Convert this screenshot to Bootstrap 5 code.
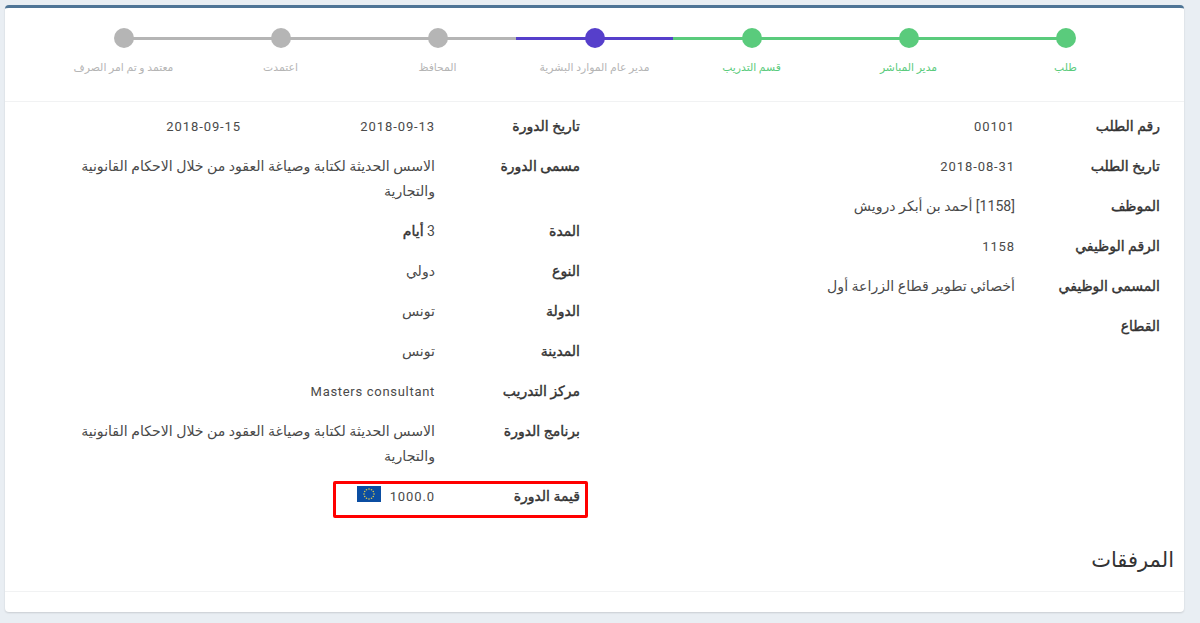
<!DOCTYPE html>
<html lang="ar" dir="rtl">
<head>
<meta charset="utf-8">
<title>طلب دورة</title>
<link rel="stylesheet" href="https://cdn.jsdelivr.net/npm/bootstrap@5.3.0/dist/css/bootstrap.min.css">
<style>
html,body{height:100%;overflow:hidden}
body{background:#e9eef3;font-family:Roboto,"DejaVu Sans",sans-serif;color:#444;font-size:13px;padding:5px 16px 11px 5px}
.sheet{height:607px;background:#fff;border:0;border-top:3px solid #4f7596;border-radius:4px;box-shadow:0 1px 2px rgba(0,0,0,.14)}
.stepper{padding:20px 40px 0;height:94px;border-bottom:1px solid #f1f2f3}
.step{flex:0 0 157px;text-align:center;font-size:10.8px;color:#b5b5b5}
.track{position:relative;height:20px}
.track::before{content:"";position:absolute;top:9px;height:3px;left:0;right:0;background:#b5b5b5}
.step:first-child .track::before{right:50%}
.step:last-child .track::before{left:50%}
.dot{position:absolute;top:0;left:50%;width:20px;height:20px;margin-left:-10px;border-radius:50%;background:#b5b5b5}
.done{color:#5acb7c}
.done .track::before,.done .dot{background:#5acb7c}
.now .track::before,.now .dot{background:#563fcb}
.step-name{margin-top:10px;line-height:20px;white-space:nowrap}
.info{padding-top:12px}
.cell-r{padding-inline-start:24px}
.cell-l{padding-inline-start:14.5px}
.line{display:flex;line-height:25px;margin-bottom:15px;position:relative}
.lab{flex:0 0 145px;font-weight:500;color:#333;font-size:14px;-webkit-text-stroke:.4px #333}
.val{flex:0 0 360px;letter-spacing:.9px;color:#4a4a4a}
.val-ar{letter-spacing:0;font-size:14.1px}
.val-lat{letter-spacing:.7px;text-align:right}
.two{flex:0 0 194px}
.strong-ar{color:#333;-webkit-text-stroke:.4px #333}
.eu{width:24px;height:16px;margin-inline-start:9px;vertical-align:-1px}
.redbox{position:absolute;top:-3px;height:37px;right:-8px;width:255px;border:3px solid #f00;border-radius:2px}
.head-att{font-size:21px;font-weight:400;color:#333;margin:0;padding:22px 10px 17px;border-bottom:1px solid #f1f2f3;line-height:28px}
</style>
</head>
<body>
<div class="card sheet">
  <div class="stepper d-flex">
    <div class="step done"><div class="track"><span class="dot"></span></div><div class="step-name">طلب</div></div>
    <div class="step done"><div class="track"><span class="dot"></span></div><div class="step-name">مدير المباشر</div></div>
    <div class="step done"><div class="track"><span class="dot"></span></div><div class="step-name">قسم التدريب</div></div>
    <div class="step now"><div class="track"><span class="dot"></span></div><div class="step-name">مدير عام الموارد البشرية</div></div>
    <div class="step"><div class="track"><span class="dot"></span></div><div class="step-name">المحافظ</div></div>
    <div class="step"><div class="track"><span class="dot"></span></div><div class="step-name">اعتمدت</div></div>
    <div class="step"><div class="track"><span class="dot"></span></div><div class="step-name">معتمد و تم امر الصرف</div></div>
  </div>
  <div class="row g-0 info">
    <div class="col-6 cell-r">
      <div class="line"><div class="lab">رقم الطلب</div><div class="val">00101</div></div>
      <div class="line"><div class="lab">تاريخ الطلب</div><div class="val">2018-08-31</div></div>
      <div class="line"><div class="lab">الموظف</div><div class="val val-ar">[1158] أحمد بن أبكر درويش</div></div>
      <div class="line"><div class="lab">الرقم الوظيفي</div><div class="val">1158</div></div>
      <div class="line"><div class="lab">المسمى الوظيفي</div><div class="val val-ar">أخصائي تطوير قطاع الزراعة أول</div></div>
      <div class="line"><div class="lab">القطاع</div><div class="val"></div></div>
    </div>
    <div class="col-6 cell-l">
      <div class="line"><div class="lab">تاريخ الدورة</div><div class="val d-flex"><div class="two">2018-09-13</div><div class="two">2018-09-15</div></div></div>
      <div class="line"><div class="lab">مسمى الدورة</div><div class="val val-ar">الاسس الحديثة لكتابة وصياغة العقود من خلال الاحكام القانونية والتجارية</div></div>
      <div class="line"><div class="lab">المدة</div><div class="val val-ar">3 <span class="strong-ar">أيام</span></div></div>
      <div class="line"><div class="lab">النوع</div><div class="val val-ar">دولي</div></div>
      <div class="line"><div class="lab">الدولة</div><div class="val val-ar">تونس</div></div>
      <div class="line"><div class="lab">المدينة</div><div class="val val-ar">تونس</div></div>
      <div class="line"><div class="lab">مركز التدريب</div><div class="val val-lat" dir="ltr">Masters consultant</div></div>
      <div class="line"><div class="lab">برنامج الدورة</div><div class="val val-ar">الاسس الحديثة لكتابة وصياغة العقود من خلال الاحكام القانونية والتجارية</div></div>
      <div class="line">
        <div class="lab">قيمة الدورة</div>
        <div class="val">1000.0<svg class="eu" viewBox="0 0 24 16" aria-hidden="true"><rect width="24" height="16" fill="#0b4ea2"/><g fill="#d9c84a"><circle cx="12" cy="3" r=".8"/><circle cx="14.5" cy="3.7" r=".8"/><circle cx="16.3" cy="5.5" r=".8"/><circle cx="17" cy="8" r=".8"/><circle cx="16.3" cy="10.5" r=".8"/><circle cx="14.5" cy="12.3" r=".8"/><circle cx="12" cy="13" r=".8"/><circle cx="9.5" cy="12.3" r=".8"/><circle cx="7.7" cy="10.5" r=".8"/><circle cx="7" cy="8" r=".8"/><circle cx="7.7" cy="5.5" r=".8"/><circle cx="9.5" cy="3.7" r=".8"/></g></svg></div>
        <div class="redbox"></div>
      </div>
    </div>
  </div>
  <h4 class="head-att">المرفقات</h4>
</div>
<script src="https://cdn.jsdelivr.net/npm/bootstrap@5.3.0/dist/js/bootstrap.bundle.min.js"></script>
</body>
</html>
